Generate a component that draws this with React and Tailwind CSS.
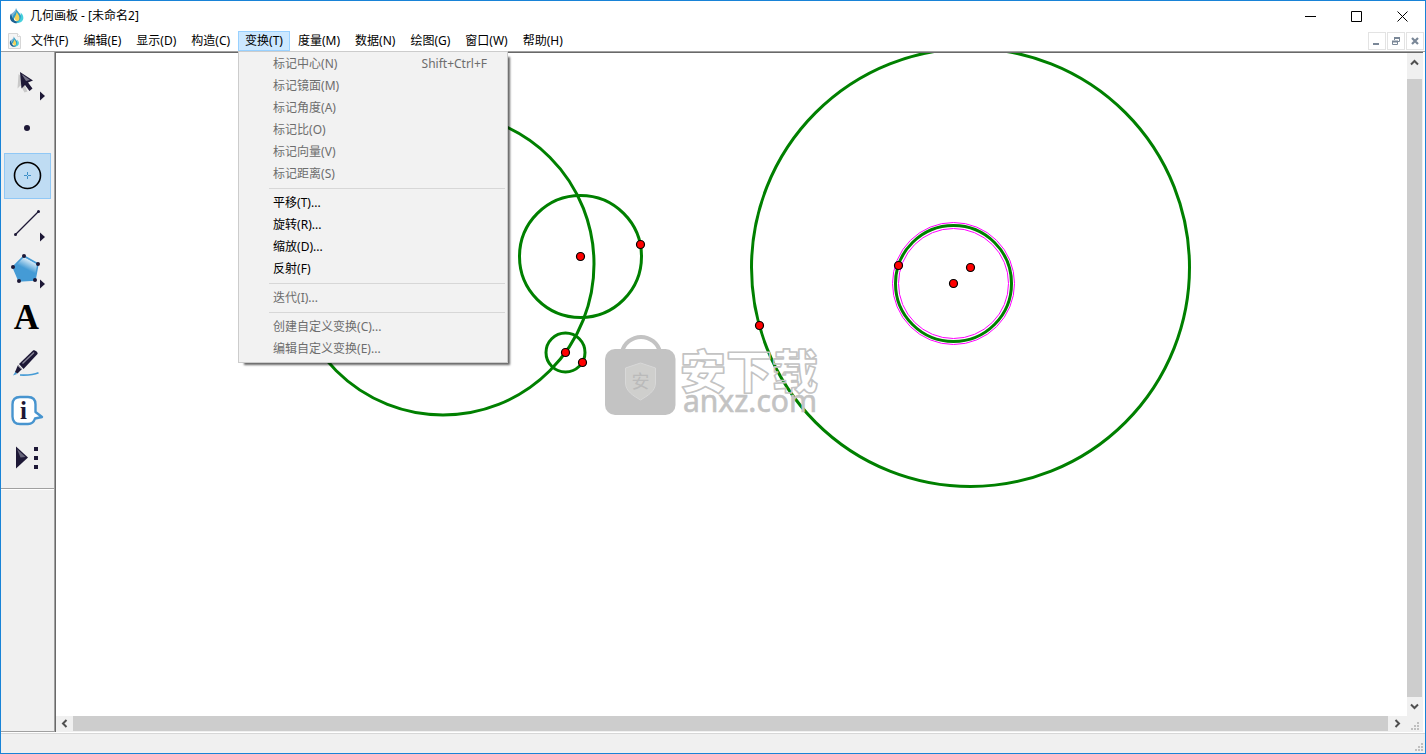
import React from 'react';

const MENUS = ['文件(F)', '编辑(E)', '显示(D)', '构造(C)', '变换(T)', '度量(M)', '数据(N)', '绘图(G)', '窗口(W)', '帮助(H)'];
const OPEN_MENU = '变换(T)';

const TRANSFORM_GROUPS = [
  [
    { label: '标记中心(N)', shortcut: 'Shift+Ctrl+F', disabled: true },
    { label: '标记镜面(M)', disabled: true },
    { label: '标记角度(A)', disabled: true },
    { label: '标记比(O)', disabled: true },
    { label: '标记向量(V)', disabled: true },
    { label: '标记距离(S)', disabled: true },
  ],
  [{ label: '平移(T)...' }, { label: '旋转(R)...' }, { label: '缩放(D)...' }, { label: '反射(F)' }],
  [{ label: '迭代(I)...', disabled: true }],
  [
    { label: '创建自定义变换(C)...', disabled: true },
    { label: '编辑自定义变换(E)...', disabled: true },
  ],
];

const CIRCLES = [
  { x: 443, y: 264, r: 151 },
  { x: 580.5, y: 256.5, r: 61 },
  { x: 565.5, y: 352.5, r: 19.5 },
  { x: 970.5, y: 267.5, r: 219 },
  { x: 953.5, y: 283.5, r: 58 },
];

const POINTS = [
  [580.5, 256.5],
  [640.5, 244.5],
  [565.5, 352.5],
  [582.5, 362.5],
  [759.5, 325.5],
  [898.5, 265.5],
  [953.5, 283.5],
  [970.5, 267.5],
];

function DropMark() {
  return (
    <>
      <path d="M6 0c.5 3.500 5 5 5.500 9.500.3 3-2 5-4.500 5S2 13 2 10C2 6 6.500 4.500 6 0z" fill="#2f9fc9" />
      <path d="M6 0c1 3-1 5-2.500 7C2 9 2.500 11.500 4 13.500 1.500 12.500 0 10.500.3 8 .5 5 5.500 4 6 0z" fill="#7fb4d6" />
      <path d="M1 5.500C-.5 8.500-.5 12 2.500 14c2 1.500 4.500 1.500 6.500.8C5 13.500 2 10.500 1 5.500z" fill="#1d6193" />
      <path d="M10.500 4.500c3.200 2.500 3.800 6.500 1.500 8.800-1.500 1.500-4 2-6 1.500 4-1 6-5 4.500-10.300z" fill="#45d0dc" />
      <path d="M6.500 4c2 2.500 3.300 4.500 2.800 7-.4 2.200-3 3-4.600 1.500C2.500 10.500 6.500 8 6.500 4z" fill="#f2d25a" />
      <path d="M4 9.500c-.4 2.300 1 4 3 3.300C5.500 12 4.500 11 4 9.500z" fill="#fff" />
    </>
  );
}

function AppIcon() {
  return (
    <svg className="h-4 w-4" viewBox="-1 0 16 16" aria-hidden="true">
      <DropMark />
    </svg>
  );
}

function DocumentIcon() {
  return (
    <svg className="h-4 w-4" viewBox="0 0 16 16" aria-hidden="true">
      <path d="M1.500.5h9l3 3v12h-12z" fill="#f5f5f5" stroke="#d6d6d6" />
      <path d="M10.500.5v3h3" fill="#fff" stroke="#d6d6d6" />
      <g transform="translate(2.800 3.500) scale(.68)">
        <DropMark />
      </g>
    </svg>
  );
}

function Flyout() {
  return <path d="M36 32.500l5 4.500-5 4.500z" fill="#1d1836" />;
}

function ToolGlyph({ name }) {
  switch (name) {
    case 'arrow':
      return (
        <>
          <path d="M14.500 15l11 10-5 1 3 6.500-3 1-4-7-3 3z" fill="#000" opacity=".16" />
          <path d="M16 13l13 8.500-5 2 4.500 6-3 2.500-4.500-6-3.500 3.500z" fill="#1d1836" />
          <path d="M17.500 15l8.500 6-4 1z" fill="#77758a" />
          <Flyout />
        </>
      );
    case 'point':
      return <circle cx="23" cy="22" r="3" fill="#1d1836" />;
    case 'compass':
      return (
        <>
          <circle cx="23.500" cy="22.500" r="13" fill="none" stroke="#000" strokeWidth="1.600" />
          <path d="M20 22.500h3m1 0h3M23.500 19v3m0 1v3" stroke="#3f90c8" />
        </>
      );
    case 'line':
      return (
        <>
          <path d="M11.500 34.500l23-23" stroke="#1d1836" strokeWidth="1.300" />
          <circle cx="11.500" cy="34.500" r="1.500" fill="#1d1836" />
          <circle cx="34.500" cy="11.500" r="1.500" fill="#1d1836" />
          <Flyout />
        </>
      );
    case 'polygon':
      return (
        <>
          <defs>
            <linearGradient id="poly" x1=".75" y1="0" x2=".45" y2=".6">
              <stop offset=".2" stopColor="#459bd5" />
              <stop offset=".3" stopColor="#d3e8f6" />
              <stop offset=".85" stopColor="#459bd5" />
            </linearGradient>
          </defs>
          <path d="M20 9l14 8-3 16-16 1-6-14z" fill="url(#poly)" stroke="#459bd5" strokeWidth="1.500" />
          {[[20, 9], [34, 17], [31, 33], [15, 34], [9, 20]].map(([x, y]) => (
            <circle key={`${x}-${y}`} cx={x} cy={y} r="2" fill="#1d1836" />
          ))}
          <Flyout />
        </>
      );
    case 'text':
      return (
        <text x="22.500" y="35" textAnchor="middle" fontSize="35" fontWeight="700" fontFamily="Liberation Serif, serif">
          A
        </text>
      );
    case 'marker':
      return (
        <>
          <path d="M9 34.500l2.500-4 1.500 2.500z" fill="#459bd5" />
          <path d="M11 31l3-7 4 4-4.500 4.500z" fill="#1d1836" />
          <path d="M15 23l14-13.500c1.500-1 5.500 2 4.500 3.500L19.500 28z" fill="#1d1836" />
          <path d="M18.500 22.500L30 11.500" stroke="#8a8899" strokeWidth="1.300" />
          <path d="M14 24.500l3.500 3.500" stroke="#eee" strokeWidth=".8" />
          <path d="M16 34c7 .3 14-.3 18.500-2.300" fill="none" stroke="#459bd5" strokeWidth="1.600" />
        </>
      );
    case 'info':
      return (
        <>
          <path
            d="M16 9h8c5 0 7.500 2.500 7.500 7.500V24l6.500 5-7 1.500c-1.200 3.800-3.500 5.500-7 5.500h-8c-5 0-7.500-2.500-7.500-7.500v-12C8.500 11.500 11 9 16 9z"
            fill="#fff"
            stroke="#4794cf"
            strokeWidth="2.400"
            strokeLinejoin="round"
          />
          <text x="19.500" y="31" textAnchor="middle" fontSize="25" fontWeight="700" fill="#1d1836" fontFamily="Liberation Serif, serif">
            i
          </text>
        </>
      );
    default:
      return (
        <>
          <path d="M12 11.500l12 11-12 11z" fill="#1d1836" />
          <path d="M13 14l8.500 8-5 .5z" fill="#66647a" />
          <path d="M30 12h4v4h-4zM30 21h4v4h-4zM30 30h4v4h-4z" fill="#1d1836" />
        </>
      );
  }
}

const TOOLS = [
  { name: 'arrow', label: '移动箭头工具' },
  { name: 'point', label: '点工具' },
  { name: 'compass', label: '圆工具', active: true },
  { name: 'line', label: '线段直尺工具' },
  { name: 'polygon', label: '多边形工具' },
  { name: 'text', label: '文字工具' },
  { name: 'marker', label: '标记工具' },
  { name: 'info', label: '信息工具' },
  { name: 'custom', label: '自定义工具' },
];

function TitleBar() {
  return (
    <header className="flex h-[30px] shrink-0 items-center">
      <div className="flex items-center gap-[5px] pl-2">
        <AppIcon />
        <h1>几何画板 - [未命名2]</h1>
      </div>
      <div className="ml-auto flex">
        <button aria-label="最小化" className="flex h-7 w-[46px] items-center justify-center">
          <svg className="h-[11px] w-[11px]" viewBox="0 0 11 11"><path d="M0 5.500h11" stroke="#000" /></svg>
        </button>
        <button aria-label="最大化" className="flex h-7 w-[46px] items-center justify-center">
          <svg className="h-[11px] w-[11px]" viewBox="0 0 11 11"><path d="M.5.5h10v10H.5z" fill="none" stroke="#000" /></svg>
        </button>
        <button aria-label="关闭" className="flex h-7 w-[46px] items-center justify-center">
          <svg className="h-[11px] w-[11px]" viewBox="0 0 11 11"><path d="M.5.5l10 10m0-10l-10 10" stroke="#000" /></svg>
        </button>
      </div>
    </header>
  );
}

function TransformMenu() {
  return (
    <div className="absolute top-5 left-0 z-10 w-[270px] border border-[#ccc] bg-[#f2f2f2] pt-px pb-[2px] shadow-[4px_4px_2px_-2px_rgba(0,0,0,0.6)]">
      {TRANSFORM_GROUPS.map((group, i) => (
        <div key={i}>
          {i > 0 && <div className="mt-[3px] mr-[2px] mb-[3px] ml-[30px] h-px bg-[#d7d7d7]" />}
          {group.map(item => (
            <button
              key={item.label}
              disabled={item.disabled}
              className="flex h-[22px] w-full items-center justify-between pr-5 pl-[34px] text-black disabled:text-[#6d6d6d]"
            >
              <span>{item.label}</span>
              {item.shortcut && <span>{item.shortcut}</span>}
            </button>
          ))}
        </div>
      ))}
    </div>
  );
}

function MenuBar() {
  return (
    <nav className="flex h-5 shrink-0 items-center gap-px">
      <div className="flex w-[22px] shrink-0 justify-end">
        <DocumentIcon />
      </div>
      {MENUS.map(menu => (
        <div key={menu} className="relative">
          {menu === OPEN_MENU ? (
            <>
              <button className="h-5 border border-[#99d1ff] bg-[#cce8ff] px-[6px] whitespace-nowrap">{menu}</button>
              <TransformMenu />
            </>
          ) : (
            <button className="h-5 px-[7px] whitespace-nowrap">{menu}</button>
          )}
        </div>
      ))}
      <div className="ml-auto flex gap-px pr-px text-[#7a8797]">
        <button aria-label="最小化文档" className="h-[18px] w-[18px] border border-[#e3e3e3]">
          <svg className="h-4 w-4" viewBox="0 0 16 16"><path d="M4 11h6" stroke="currentColor" strokeWidth="2" /></svg>
        </button>
        <button aria-label="还原文档" className="h-[18px] w-[18px] border border-[#e3e3e3]">
          <svg className="h-4 w-4" viewBox="0 0 16 16">
            <path d="M6.500 7V4.500h5v4H10M4.500 8.500h5v3h-5z" fill="none" stroke="currentColor" />
            <path d="M6 5h6M4 8.500h6" stroke="currentColor" strokeWidth="2" />
          </svg>
        </button>
        <button aria-label="关闭文档" className="h-[18px] w-[18px] border border-[#e3e3e3]">
          <svg className="h-4 w-4" viewBox="0 0 16 16"><path d="M5 5l6 6m0-6l-6 6" stroke="currentColor" strokeWidth="2.200" /></svg>
        </button>
      </div>
    </nav>
  );
}

function Toolbox() {
  return (
    <aside className="w-[53px] shrink-0 border-b border-[#a0a0a0] bg-[#f0f0f0]">
      <div className="flex flex-col items-center gap-px border-b border-[#a0a0a0] pt-[7px] pb-[7px]">
        {TOOLS.map(tool => (
          <button
            key={tool.name}
            aria-label={tool.label}
            className={tool.active ? 'h-[46px] w-[47px] bg-[#bfdcf3] outline outline-offset-[-1px] outline-[#90c8f6]' : 'h-[46px] w-[47px]'}
          >
            <svg className="h-[46px] w-[47px]" viewBox="0 0 47 46">
              <ToolGlyph name={tool.name} />
            </svg>
          </button>
        ))}
      </div>
      <div className="h-px bg-white" />
    </aside>
  );
}

function Watermark() {
  return (
    <g>
      <path d="M622 352a19.500 19.500 0 0 1 38 0" fill="none" stroke="#c3c3c3" strokeWidth="4" />
      <rect x="605" y="349" width="70.500" height="66" rx="10" fill="#c3c3c3" />
      <path d="M640.500 363l15 5v15c0 8-8 13-15 17-7-4-15-9-15-17v-15z" fill="#cfcfcd" stroke="#d8d8d8" />
      <text x="640.500" y="388" textAnchor="middle" fontSize="18" fill="#bababa" fontFamily="Noto Sans CJK SC, sans-serif">安</text>
      <text
        x="680"
        y="388"
        fontSize="46"
        fontWeight="900"
        fill="none"
        stroke="#c3c3c3"
        strokeWidth="1.600"
        strokeLinejoin="round"
        fontFamily="Noto Sans CJK SC, sans-serif"
      >
        安下载
      </text>
      <text x="683" y="412" fontSize="30" fill="#c3c3c3" stroke="#c3c3c3" strokeWidth=".6" fontFamily="Noto Sans, sans-serif">anxz.com</text>
    </g>
  );
}

function Sketch() {
  return (
    <div className="min-h-0 min-w-0 flex-1 overflow-hidden bg-white">
      <svg className="h-[663px] w-[1351px] max-w-none" viewBox="56 53 1351 663">
        {CIRCLES.map(c => (
          <circle key={`${c.x}-${c.y}`} cx={c.x} cy={c.y} r={c.r} fill="none" stroke="#008000" strokeWidth="3" />
        ))}
        <circle cx="953.500" cy="283.500" r="61" fill="none" stroke="#f0f" />
        <circle cx="953.500" cy="283.500" r="55" fill="none" stroke="#f0f" />
        <Watermark />
        {POINTS.map(([x, y]) => (
          <circle key={`${x}-${y}`} cx={x} cy={y} r="4" fill="#f00" stroke="#000" strokeWidth="1.200" />
        ))}
      </svg>
    </div>
  );
}

function Chevron({ d }) {
  return (
    <svg className="h-[9px] w-[9px]" viewBox="0 0 9 9">
      <path d={d} fill="none" stroke="#505050" strokeWidth="2" />
    </svg>
  );
}

function VerticalScroll() {
  return (
    <div className="flex w-4 shrink-0 flex-col bg-[#f0f0f0] pr-px">
      <button aria-label="向上滚动" className="flex h-[26px] items-start justify-center pt-[5px]"><Chevron d="M1 6.500l3.500-3.500L8 6.500" /></button>
      <div className="flex-1 bg-[#cdcdcd]" />
      <button aria-label="向下滚动" className="flex h-[19px] items-center justify-center"><Chevron d="M1 2.500l3.500 3.500L8 2.500" /></button>
    </div>
  );
}

function Grip() {
  return (
    <svg className="h-2 w-2 shrink-0" viewBox="0 0 8 8" aria-hidden="true">
      <path d="M6 0h2v2H6zM3 3h2v2H3zM6 3h2v2H6zM0 6h2v2H0zM3 6h2v2H3zM6 6h2v2H6z" fill="#bfbfbf" />
    </svg>
  );
}

function HorizontalScroll() {
  return (
    <div className="flex h-4 shrink-0 bg-[#f0f0f0] pb-px">
      <button aria-label="向左滚动" className="flex w-[17px] items-center justify-center"><Chevron d="M6.500 1L3 4.500 6.500 8" /></button>
      <div className="flex-1 bg-[#cdcdcd]" />
      <button aria-label="向右滚动" className="flex w-[19px] items-center justify-center"><Chevron d="M2.500 1L6 4.500 2.500 8" /></button>
      <div className="flex w-4 items-end justify-center pb-px"><Grip /></div>
    </div>
  );
}

export default function App() {
  return (
    <div className="flex h-screen flex-col border border-[#1883d7] bg-white font-['Noto_Sans','Noto_Sans_CJK_SC',sans-serif] text-[12px] leading-4 text-black">
      <TitleBar />
      <MenuBar />
      <div className="flex min-h-0 flex-1 border-t border-[#a0a0a0]">
        <Toolbox />
        <main className="mr-[2px] flex min-w-0 flex-1 flex-col border-l border-[#a0a0a0]">
          <div className="flex min-h-0 flex-1 flex-col border-t border-l border-[#696969]">
            <div className="flex min-h-0 flex-1">
              <Sketch />
              <VerticalScroll />
            </div>
            <HorizontalScroll />
          </div>
        </main>
      </div>
      <footer className="mt-px flex h-5 shrink-0 items-end justify-end border-t border-[#d7d7d7] bg-[#f0f0f0] pr-[2px] pb-[2px]">
        <Grip />
      </footer>
    </div>
  );
}
